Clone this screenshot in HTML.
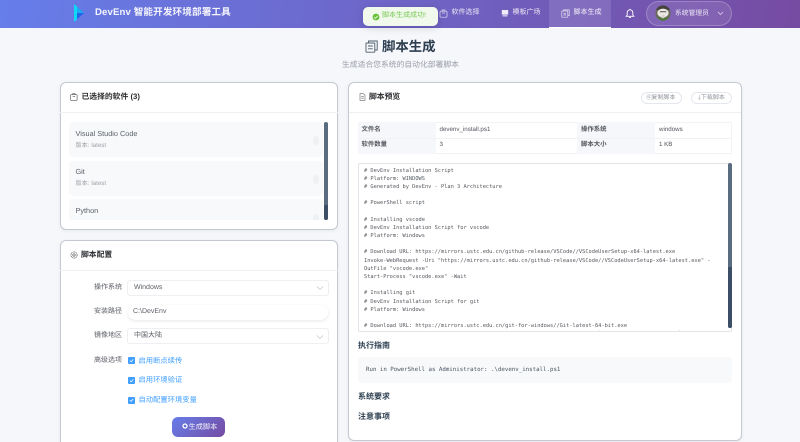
<!DOCTYPE html>
<html lang="zh-CN">
<head>
<meta charset="utf-8">
<title>DevEnv 智能开发环境部署工具</title>
<style>
html,body{margin:0;padding:0;width:800px;height:442px;overflow:hidden;background:#f5f7fb}
#w{position:absolute;left:0;top:0;width:800px;height:442px;overflow:hidden;font-family:"Liberation Sans","Noto Sans CJK SC",sans-serif;filter:blur(.35px);text-rendering:geometricPrecision}
.a{position:absolute;box-sizing:border-box}
.t{position:absolute;white-space:pre;line-height:12px;height:12px}
.card{position:absolute;box-sizing:border-box;background:#fff;border:1px solid #c3c8d1;border-radius:6px;box-shadow:0 1px 4px rgba(0,0,0,.06)}
.hl{position:absolute;height:1px;background:#eef0f3}
.h{font-size:7.8px;font-weight:700;color:#2b2d30}
.item{position:absolute;left:69px;width:254px;background:#f8f9fa;border-radius:4px}
.lab{font-size:7px;color:#5c5f66;width:40px;text-align:right}
.in{position:absolute;left:128px;width:200px;height:15px;background:#fff;border-radius:1.5px;box-shadow:0 0 0 .5px #dcdfe6}
.v{font-size:7px;color:#5c5f66}
.cb{position:absolute;left:128px;width:7px;height:7px;background:#409eff;border-radius:1px}
.cl{font-size:7.3px;color:#409eff}
.nav{font-size:7px;color:rgba(255,255,255,.85)}
.mono{font-family:"DejaVu Sans Mono","Liberation Mono",monospace;font-size:5.34px;color:#55595f;line-height:8.19px}
.th{font-size:6.4px;font-weight:700;color:#55585e}
.td{font-size:6.2px;color:#55585e}
.sec{font-size:8px;font-weight:700;color:#2c3e50}
.btn{position:absolute;top:91.5px;height:12px;background:#fff;border:.5px solid #e4e7ed;border-radius:6px;box-sizing:border-box;font-size:6px;line-height:11px;color:#909399;text-align:center}
</style>
</head>
<body>
<div id="w">
<!-- header -->
<div class="a" style="left:0;top:0;width:800px;height:27.5px;background:linear-gradient(100deg,#667eea 0%,#764ba2 100%)"></div>
<svg class="a" style="left:72px;top:2px" width="14" height="22" viewBox="0 0 14 22">
<polygon points="2,2 12,11 2,20" fill="#1f63ea"/>
<polygon points="2,2 5,4.5 5,17.5 2,20" fill="#0fd8f6"/>
<polygon points="5,4.5 12,11 5,11" fill="#1fa8f4"/>
</svg>
<div class="t" style="left:95px;top:7.3px;font-size:9.6px;font-weight:700;color:#f4f4fc;letter-spacing:.12px">DevEnv 智能开发环境部署工具</div>

<div class="a" style="left:549px;top:0;width:62px;height:27.5px;background:rgba(255,255,255,.12)"></div>
<div class="a" style="left:549px;top:27px;width:62px;height:1px;background:#fff"></div>

<svg class="a" style="left:439px;top:8.5px" width="9" height="9" viewBox="0 0 9 9" fill="none" stroke="#e6e1f3" stroke-width=".7"><rect x="1" y="2.2" width="7" height="6" rx=".8"/><path d="M3 2.2V1h3v1.2M3 4h3"/></svg>
<div class="t nav" style="left:451.5px;top:7px">软件选择</div>
<svg class="a" style="left:500.5px;top:8.5px" width="8" height="9" viewBox="0 0 8 9"><rect x=".8" y="1" width="6.4" height="4.6" rx=".5" fill="#f0edf8"/><rect x="1.6" y="6.3" width="4.8" height="1.1" fill="#f0edf8"/></svg>
<div class="t nav" style="left:512.5px;top:7px">模板广场</div>
<svg class="a" style="left:561px;top:8.5px" width="9" height="9" viewBox="0 0 9 9" fill="none" stroke="#e6e1f3" stroke-width=".7"><rect x=".8" y="2" width="6" height="6.2" rx=".6"/><path d="M2.6 2V.9h5.6v5.7H6.8M2.5 4.4h2.5M2.5 6h2.5"/></svg>
<div class="t nav" style="left:573.5px;top:7px;color:#f2eff9">脚本生成</div>

<svg class="a" style="left:625px;top:8px" width="10" height="11" viewBox="0 0 10 11" fill="none" stroke="#fff" stroke-width=".9"><path d="M1.2 8.3h7.6L7.8 7V4.6a2.8 2.8 0 0 0-5.6 0V7zM5 1.8V.9M4 9.6h2"/></svg>

<div class="a" style="left:646px;top:1px;width:86px;height:25px;border-radius:12.5px;background:rgba(255,255,255,.1);border:.6px solid rgba(255,255,255,.22)"></div>
<svg class="a" style="left:654.5px;top:5px" width="16" height="16" viewBox="0 0 16 16">
<circle cx="8" cy="8" r="7.6" fill="#6a6a5c"/>
<path d="M1 11a7.6 7.6 0 0 0 14 0L12 13H4z" fill="#4f7a3c"/>
<path d="M1 5a7.6 7.6 0 0 1 14 0z" fill="#454240"/>
<ellipse cx="8" cy="8" rx="5.6" ry="4.4" fill="#ebe9e5"/>
<rect x="4.8" y="6" width="6.4" height="1.3" fill="#77736f"/>
<circle cx="8" cy="11.5" r="1.8" fill="#d8d5cf"/>
</svg>
<div class="t" style="left:675px;top:7.5px;font-size:6.8px;color:rgba(255,255,255,.85)">系统管理员</div>
<svg class="a" style="left:716.5px;top:11px" width="7" height="5" viewBox="0 0 7 5" fill="none" stroke="#e4dff0" stroke-width=".7"><path d="M1 1l2.5 2.5L6 1"/></svg>

<!-- page title -->
<svg class="a" style="left:364.5px;top:39.5px" width="13" height="13" viewBox="0 0 13 13" fill="none" stroke="#4d5b6b" stroke-width=".9"><rect x="1" y="3" width="8.8" height="9.2" rx=".4"/><path d="M3.5 3V1h8.7v9H9.8M3 6h4.8M3 8.8h4.8"/></svg>
<div class="t" style="left:382px;top:40px;font-size:13.4px;font-weight:700;color:#2c3e50;line-height:13px;height:13px">脚本生成</div>
<div class="t" style="left:342px;top:58.5px;font-size:7.8px;color:#9a9ea5">生成适合您系统的自动化部署脚本</div>

<!-- card 1 -->
<div class="card" style="left:59.5px;top:82px;width:278.5px;height:147.5px"></div>
<div class="hl" style="left:60px;top:112px;width:277.5px"></div>
<svg class="a" style="left:69.5px;top:93px" width="8" height="8" viewBox="0 0 8 8" fill="none" stroke="#555" stroke-width=".65"><rect x=".7" y="1.7" width="6.4" height="5.7" rx=".6"/><path d="M2.7 1.7V.7h2.4v1M2.7 3.7h2.4"/></svg>
<div class="t h" style="left:81.5px;top:91px">已选择的软件 (3)</div>

<div class="a" style="left:69px;top:122px;width:254px;height:97.5px;overflow:hidden">
 <div class="item" style="left:0;top:0;height:35px"></div>
 <div class="item" style="left:0;top:38.5px;height:35.5px"></div>
 <div class="item" style="left:0;top:77px;height:35px"></div>
 <div class="a" style="left:244px;top:14px;width:6px;height:9px;border-radius:3px;background:#f0f1f3"></div>
 <div class="a" style="left:244px;top:53px;width:6px;height:9px;border-radius:3px;background:#f0f1f3"></div>
 <div class="a" style="left:244px;top:91.5px;width:6px;height:6px;border-radius:3px 3px 0 0;background:#f0f1f3"></div>
</div>
<div class="t" style="left:75.5px;top:127.5px;font-size:7.3px;color:#5a606a">Visual Studio Code</div>
<div class="t" style="left:75.5px;top:139.5px;font-size:6.2px;color:#a0a3aa">版本: latest</div>
<div class="t" style="left:75.5px;top:166px;font-size:7.3px;color:#5a606a">Git</div>
<div class="t" style="left:75.5px;top:178px;font-size:6.2px;color:#a0a3aa">版本: latest</div>
<div class="t" style="left:75.5px;top:204.5px;font-size:7.3px;color:#5a606a">Python</div>
<div class="a" style="left:324.3px;top:122px;width:3.7px;height:97.5px;border-radius:2px;background:#5a6c80"></div>
<div class="a" style="left:324.3px;top:204.5px;width:3.7px;height:15px;border-radius:0 0 2px 2px;background:#3c4d66"></div>

<!-- card 2 -->
<div class="card" style="left:59.5px;top:239.5px;width:278.5px;height:215px"></div>
<div class="hl" style="left:60px;top:269.5px;width:277.5px"></div>
<svg class="a" style="left:69.5px;top:251px" width="8" height="8" viewBox="0 0 8 8" fill="none" stroke="#555" stroke-width=".7"><circle cx="4" cy="4" r="1.2"/><circle cx="4" cy="4" r="3.1" stroke-dasharray="1.3 .5"/></svg>
<div class="t h" style="left:81px;top:249px">脚本配置</div>

<div class="t lab" style="left:82px;top:281.5px">操作系统</div>
<div class="in" style="top:280.5px;height:14.5px"></div>
<div class="t v" style="left:134px;top:281.5px">Windows</div>
<svg class="a" style="left:316px;top:285px" width="8" height="6" viewBox="0 0 8 6" fill="none" stroke="#b8bcc4" stroke-width=".6"><path d="M1 1.5l3 3 3-3"/></svg>

<div class="t lab" style="left:82px;top:306px">安装路径</div>
<div class="in" style="top:304.5px;height:15px;border-radius:7.5px;box-shadow:0 1px 3px rgba(0,0,0,.1)"></div>
<div class="t v" style="left:133px;top:306px">C:\DevEnv</div>

<div class="t lab" style="left:82px;top:330px">镜像地区</div>
<div class="in" style="top:328.8px;height:14.5px"></div>
<div class="t v" style="left:134px;top:330px">中国大陆</div>
<svg class="a" style="left:316px;top:333.5px" width="8" height="6" viewBox="0 0 8 6" fill="none" stroke="#b8bcc4" stroke-width=".6"><path d="M1 1.5l3 3 3-3"/></svg>

<div class="t lab" style="left:82px;top:354.5px">高级选项</div>
<div class="cb" style="top:357px"></div>
<div class="cb" style="top:377px"></div>
<div class="cb" style="top:396.5px"></div>
<svg class="a" style="left:128px;top:357px" width="7" height="47" viewBox="0 0 7 47" fill="none" stroke="#fff" stroke-width=".7"><path d="M1.8 3.6l1.3 1.3 2.2-2.5M1.8 23.6l1.3 1.3 2.2-2.5M1.8 43.1l1.3 1.3 2.2-2.5"/></svg>
<div class="t cl" style="left:138.5px;top:354.5px">启用断点续传</div>
<div class="t cl" style="left:138.5px;top:374px">启用环境验证</div>
<div class="t cl" style="left:138.5px;top:393.8px">自动配置环境变量</div>

<div class="a" style="left:172px;top:417px;width:53px;height:19.5px;border-radius:6px;background:linear-gradient(135deg,#667eea,#764ba2)"></div>
<svg class="a" style="left:182px;top:423px" width="6" height="6" viewBox="0 0 6 6"><circle cx="3" cy="3" r="2" fill="none" stroke="#fff" stroke-width="1.3"/></svg>
<div class="t" style="left:188.5px;top:420.5px;font-size:7.2px;color:#f2f0f8">生成脚本</div>

<!-- right card -->
<div class="card" style="left:348px;top:82px;width:393.5px;height:359px"></div>
<div class="hl" style="left:348.5px;top:112px;width:392.5px"></div>
<svg class="a" style="left:358.5px;top:93px" width="7" height="8" viewBox="0 0 7 8" fill="none" stroke="#666" stroke-width=".6"><path d="M1 .7h3.4L6 2.3v5H1zM2.2 3.6h2.6M2.2 5.2h2.6"/></svg>
<div class="t h" style="left:369px;top:91px">脚本预览</div>
<div class="btn" style="left:640.5px;width:41px">⎘复制脚本</div>
<div class="btn" style="left:691px;width:41px">⤓下载脚本</div>

<!-- info table -->
<div class="a" style="left:358px;top:122px;width:374px;height:31.5px;border:.5px solid #f2f3f5"></div>
<div class="a" style="left:358px;top:122px;width:78px;height:31.5px;background:#f5f7fa"></div>
<div class="a" style="left:577px;top:122px;width:78px;height:31.5px;background:#f5f7fa"></div>
<div class="a" style="left:358px;top:137.5px;width:374px;height:.6px;background:#f0f2f4"></div>
<div class="t th" style="left:361.5px;top:124px">文件名</div>
<div class="t td" style="left:439.5px;top:124px">devenv_install.ps1</div>
<div class="t th" style="left:581px;top:124px">操作系统</div>
<div class="t td" style="left:659px;top:124px">windows</div>
<div class="t th" style="left:361.5px;top:139px">软件数量</div>
<div class="t td" style="left:439.5px;top:139px">3</div>
<div class="t th" style="left:581px;top:139px">脚本大小</div>
<div class="t td" style="left:659px;top:139px">1 KB</div>

<!-- code box -->
<div class="a" style="left:358px;top:163px;width:374px;height:169px;border:.7px solid #e1e4e9;border-radius:2px;overflow:hidden;background:#fff">
<div class="a mono" style="left:5px;top:2.6px;white-space:pre"># DevEnv Installation Script
# Platform: WINDOWS
# Generated by DevEnv - Plan 3 Architecture

# PowerShell script

# Installing vscode
# DevEnv Installation Script for vscode
# Platform: Windows

# Download URL: https://mirrors.ustc.edu.cn/github-release/VSCode//VSCodeUserSetup-x64-latest.exe
Invoke-WebRequest -Uri "https://mirrors.ustc.edu.cn/github-release/VSCode//VSCodeUserSetup-x64-latest.exe" -
OutFile "vscode.exe"
Start-Process "vscode.exe" -Wait

# Installing git
# DevEnv Installation Script for git
# Platform: Windows

# Download URL: https://mirrors.ustc.edu.cn/git-for-windows//Git-latest-64-bit.exe
Invoke-WebRequest -Uri "https://mirrors.ustc.edu.cn/git-for-windows//Git-latest-64-bit.exe" -OutFile "git.exe"</div>
</div>
<div class="a" style="left:728px;top:163px;width:3.7px;height:165px;border-radius:2px;background:#5a6c80"></div>
<div class="a" style="left:728px;top:267px;width:3.7px;height:61px;border-radius:0 0 2px 2px;background:#3c4d66"></div>

<div class="t sec" style="left:358px;top:340px">执行指南</div>
<div class="a" style="left:358px;top:357px;width:374px;height:26px;background:#f8f9fa;border-radius:4px"></div>
<div class="a mono" style="left:366px;top:365.7px;white-space:pre;color:#4a5563;font-size:5.78px">Run in PowerShell as Administrator: .\devenv_install.ps1</div>
<div class="t sec" style="left:358px;top:391px">系统要求</div>
<div class="t sec" style="left:358px;top:410.5px">注意事项</div>

<!-- toast -->
<div class="a" style="left:363px;top:6.5px;width:75px;height:19.5px;background:#f0f9eb;border-radius:5px;box-shadow:0 2px 8px rgba(0,0,0,.14)"></div>
<svg class="a" style="left:371.5px;top:12.5px" width="8" height="8" viewBox="0 0 8 8"><circle cx="4" cy="4" r="3.4" fill="#67c23a"/><path d="M2.3 4.1l1.2 1.2 2.2-2.4" fill="none" stroke="#fff" stroke-width=".8"/></svg>
<div class="t" style="left:382px;top:10px;font-size:7px;color:#7cc95a">脚本生成成功!</div>
</div>
</body>
</html>
